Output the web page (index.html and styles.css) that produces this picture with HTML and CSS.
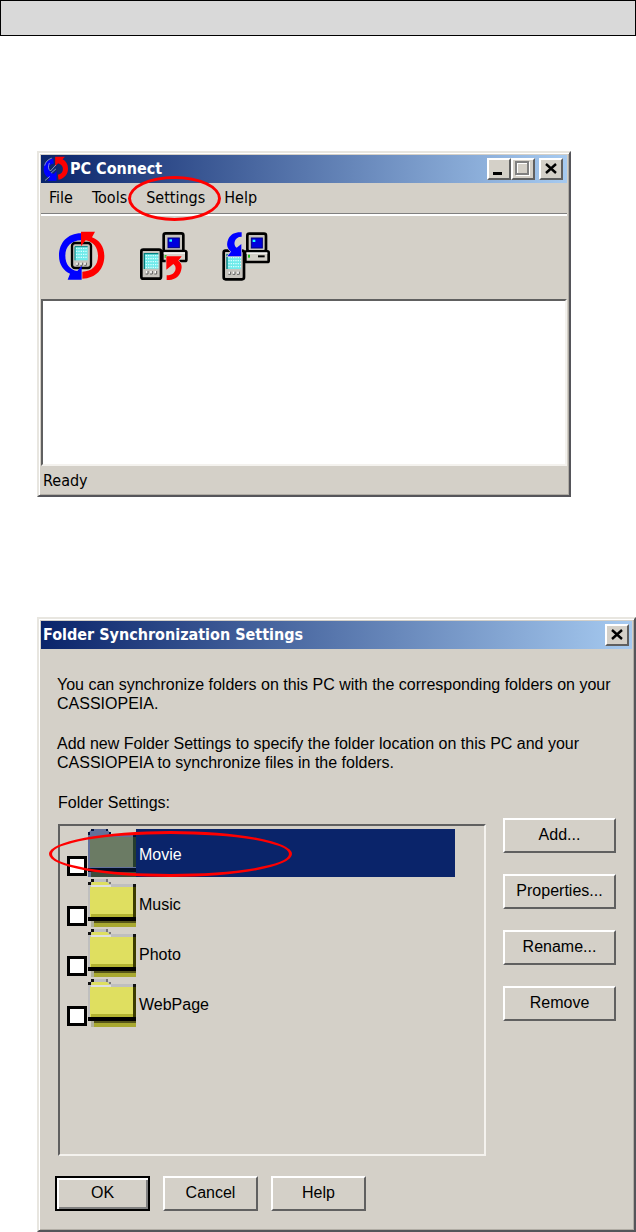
FILE: index.html
```
<!DOCTYPE html>
<html lang="en">
  <head>
    <meta charset="UTF-8" />
    <meta name="viewport" content="width=device-width, initial-scale=1.0" />
    <title>PC Connect</title>
    <link rel="stylesheet" href="styles.css">
  </head>
  <body>
    <header class="page-bar"></header>

    <main class="page">
      <!-- main window -->
      <section class="window window--main">
        <div class="titlebar titlebar--app">
          <svg class="titlebar__icon" viewBox="24 26 74 76" aria-hidden="true">
            <path d="M54 33C36 36 26 50 26 64C26 78 33 88 44 92L37 99H64V70L56 79C46 76 42 70 42 62C42 54 47 49 56 48Z" fill="#00f" />
            <path d="M70 96C88 92 98 78 98 63C98 50 92 40 82 35L89 28H60V56L69 47C78 50 83 56 83 64C83 72 78 79 68 81Z" fill="red" />
            <path d="M50 32Q32 38 29 54M43 46Q36 62 46 70L62 52M48 76L62 64M30 98L44 86" fill="none" stroke="#c4c8d8" stroke-width="2" />
          </svg>
          <h1 class="titlebar__text">PC Connect</h1>
          <div class="titlebar__buttons">
            <button class="caption-btn" type="button" aria-label="Minimize">
              <svg viewBox="0 0 20 18"><rect x="4" y="12" width="9" height="3" /></svg>
            </button>
            <button class="caption-btn" type="button" aria-label="Maximize" disabled>
              <svg viewBox="0 0 20 18">
                <path d="M4 3H16V15H4Z" fill="none" stroke="#fff" stroke-width="2" />
                <path d="M3 2H15V14H3Z" fill="none" stroke="#808080" stroke-width="2" />
              </svg>
            </button>
            <button class="caption-btn caption-btn--close" type="button" aria-label="Close">
              <svg viewBox="0 0 20 18"><path d="M5 4L15 13M15 4L5 13" stroke="#000" stroke-width="2.4" /></svg>
            </button>
          </div>
        </div>

        <nav class="menubar">
          <a class="menubar__item" href="#">File</a>
          <a class="menubar__item" href="#">Tools</a>
          <a class="menubar__item menubar__item--marked" href="#">Settings</a>
          <a class="menubar__item" href="#">Help</a>
        </nav>

        <div class="toolbar">
          <button class="toolbar__btn" type="button" aria-label="Synchronize">
            <svg viewBox="25 20 144 150">
              <rect x="67" y="56" width="57" height="75" rx="9" fill="#c6c3bd" stroke="#000" stroke-width="7" />
              <rect x="76" y="67" width="38" height="41" fill="#6feaea" />
              <path d="M79 72H114M79 81H114M79 90H114M79 99H114" stroke="#d5ffff" stroke-width="4" stroke-dasharray="4 3" />
              <path d="M76 108V67H114" fill="none" stroke="#008080" stroke-width="3" />
              <path d="M80 119H85M92 119H97M104 119H109" stroke="#fff" stroke-width="7" />
              <path d="M86 115V123H80M98 115V123H92M110 115V123H104" fill="none" stroke="#606060" stroke-width="3" />
              <path d="M94 27C54 27 28 55 28 94C28 121 42 139 61 148L54 166H96V124L83 140C60 136 47 119 47 94C47 66 65 49 94 48Z" fill="#00f" />
              <path d="M98 163C138 163 164 134 164 96C164 66 149 47 127 39L136 22H94V66L108 48C132 53 145 70 145 95C145 123 127 142 98 142Z" fill="red" />
            </svg>
          </button>
          <button class="toolbar__btn" type="button" aria-label="Copy to PC">
            <svg viewBox="315 255 144 150">
              <rect x="386" y="262" width="59" height="55" rx="6" fill="#c6c3bd" stroke="#000" stroke-width="8" />
              <rect x="399" y="276" width="34" height="29" fill="#00d" stroke="#000080" stroke-width="3" />
              <rect x="403" y="280" width="8" height="7" fill="#2ff" />
              <rect x="382" y="315" width="72" height="30" rx="4" fill="#d4d0c8" stroke="#000" stroke-width="8" />
              <path d="M386 321H450" stroke="#fff" stroke-width="4" />
              <rect x="389" y="327" width="6" height="9" fill="#19c119" />
              <rect x="319" y="311" width="59" height="87" rx="6" fill="#c6c3bd" stroke="#000" stroke-width="8" />
              <rect x="328" y="323" width="42" height="45" fill="#6feaea" />
              <path d="M332 329H370M332 338H370M332 347H370M332 356H370M332 364H370" stroke="#d5ffff" stroke-width="4" stroke-dasharray="4 3" />
              <path d="M328 369V323H370" fill="none" stroke="#008080" stroke-width="4" />
              <path d="M333 379H338M346 379H351M359 379H364" stroke="#fff" stroke-width="8" />
              <path d="M339 375V384H332M352 375V384H345M365 375V384H358" fill="none" stroke="#606060" stroke-width="3" />
              <path d="M394 331H440L430 344C441 352 443 363 436 380C429 395 417 402 395 402V388C409 388 418 382 421 373C423 363 421 359 415 354L394 371Z" fill="red" stroke="#d4d0c8" stroke-width="4" paint-order="stroke" />
            </svg>
          </button>
          <button class="toolbar__btn" type="button" aria-label="Copy to device">
            <svg viewBox="561 249 144 150">
              <rect x="566" y="308" width="61" height="86" rx="6" fill="#c6c3bd" stroke="#000" stroke-width="8" />
              <rect x="576" y="320" width="42" height="43" fill="#6feaea" />
              <path d="M580 329H618M580 338H618M580 347H618M580 356H618" stroke="#d5ffff" stroke-width="4" stroke-dasharray="4 3" />
              <path d="M576 363V320H618" fill="none" stroke="#008080" stroke-width="4" />
              <path d="M581 375H586M594 375H599M607 375H612" stroke="#fff" stroke-width="8" />
              <path d="M587 371V379H580M600 371V379H593M613 371V379H606" fill="none" stroke="#606060" stroke-width="3" />
              <rect x="637" y="257" width="56" height="53" rx="6" fill="#c6c3bd" stroke="#000" stroke-width="8" />
              <rect x="649" y="270" width="33" height="30" fill="#00d" stroke="#000080" stroke-width="3" />
              <rect x="653" y="275" width="8" height="7" fill="#2ff" />
              <rect x="631" y="310" width="70" height="32" rx="4" fill="#d4d0c8" stroke="#000" stroke-width="8" />
              <path d="M634 315H697" stroke="#fff" stroke-width="4" />
              <rect x="639" y="320" width="6" height="9" fill="#19c119" />
              <path d="M669 325H689" stroke="#000" stroke-width="6" />
              <path d="M620 253V266C608 266 601 272 599 281C597 290 600 295 605 299L619 288V325H577L588 311C576 300 573 289 580 273C588 258 600 252 620 253Z" fill="#00f" stroke="#d4d0c8" stroke-width="4" paint-order="stroke" />
            </svg>
          </button>
        </div>

        <div class="client"></div>
        <footer class="statusbar">Ready</footer>
      </section>

      <!-- folder settings dialog -->
      <form class="window window--dialog">
        <div class="titlebar">
          <h2 class="titlebar__text">Folder Synchronization Settings</h2>
          <div class="titlebar__buttons">
            <button class="caption-btn" type="button" aria-label="Close">
              <svg viewBox="0 0 20 18"><path d="M5 4L15 13M15 4L5 13" stroke="#000" stroke-width="2.4" /></svg>
            </button>
          </div>
        </div>

        <div class="dialog">
          <p class="dialog__text">You can synchronize folders on this PC with the corresponding folders on your<br />CASSIOPEIA.</p>
          <p class="dialog__text">Add new Folder Settings to specify the folder location on this PC and your<br />CASSIOPEIA to synchronize files in the folders.</p>
          <p class="dialog__label" id="folders-label">Folder Settings:</p>

          <div class="dialog__main">
            <ul class="folders" aria-labelledby="folders-label">
              <li class="folder folder--selected">
                <input class="folder__check" id="folder-movie" type="checkbox" />
                <svg class="folder__icon" viewBox="0 0 48 48" aria-hidden="true">
                  <path d="M0 4L4 0H19L23 5H48V48H0Z" fill="#62719b" />
                  <path d="M2 8H45V38H2Z" fill="#6b7b64" />
                  <path d="M45 8H48V38H45Z" fill="#253d2e" />
                  <path d="M0 39H48V43H0Z" fill="#041029" />
                  <path d="M3 43H48V48H3Z" fill="#3d4c3c" />
                  <path d="M0 3H2V6H0ZM3 0H6V2H3ZM18 0H20V2H18ZM21 3H23V5H21ZM45 5H48V8H45Z" fill="#05133d" />
                </svg>
                <label class="folder__name" for="folder-movie">Movie</label>
              </li>
              <li class="folder">
                <input class="folder__check" id="folder-music" type="checkbox" />
                <svg class="folder__icon" viewBox="0 0 48 48" aria-hidden="true"><use href="#folder" /></svg>
                <label class="folder__name" for="folder-music">Music</label>
              </li>
              <li class="folder">
                <input class="folder__check" id="folder-photo" type="checkbox" />
                <svg class="folder__icon" viewBox="0 0 48 48" aria-hidden="true"><use href="#folder" /></svg>
                <label class="folder__name" for="folder-photo">Photo</label>
              </li>
              <li class="folder">
                <input class="folder__check" id="folder-webpage" type="checkbox" />
                <svg class="folder__icon" viewBox="0 0 48 48" aria-hidden="true"><use href="#folder" /></svg>
                <label class="folder__name" for="folder-webpage">WebPage</label>
              </li>
            </ul>

            <div class="dialog__side">
              <button class="btn" type="button">Add...</button>
              <button class="btn" type="button">Properties...</button>
              <button class="btn" type="button">Rename...</button>
              <button class="btn" type="button">Remove</button>
            </div>
          </div>

          <div class="dialog__actions">
            <button class="btn btn--default" type="submit">OK</button>
            <button class="btn" type="button">Cancel</button>
            <button class="btn" type="button">Help</button>
          </div>
        </div>
      </form>
    </main>

    <svg class="defs" aria-hidden="true">
      <defs>
        <g id="folder">
          <path d="M0 5L4 0H18L23 5H46V8H3V38H0Z" fill="#bfbfbf" />
          <path d="M4 3H19L22 6H3Z" fill="#dfdf60" />
          <path d="M3 6H23V8H3Z" fill="#e0e0e0" />
          <path d="M2 8H45V38H2Z" fill="#dfdf60" />
          <path d="M3 35H45V38H3Z" fill="#b4b430" />
          <path d="M3 43H48V48H3Z" fill="#a8a830" />
          <path d="M3 42H48V44H3Z" fill="#55551a" />
          <path d="M45 8H48V40H45Z" fill="#3c3c00" />
          <path d="M0 38H48V42H0Z" fill="#000" />
          <path d="M3 42H6V48H3Z" fill="#b0b09a" />
          <path d="M0 3H3V6H0ZM3 0H6V3H3ZM45 5H48V8H45Z" fill="#111" />
          <path d="M18 0H20V3H18ZM21 3H23V5H21Z" fill="#777" />
        </g>
      </defs>
    </svg>
  </body>
</html>
```
FILE: styles.css
```
*,
*::after {
  box-sizing: border-box;
}

body {
  margin: 0;
  background-color: #fff;
  color: #000;
  font-family: "Liberation Sans", Arial, sans-serif;
  font-size: 16px;
  line-height: 20px;
}

.page-bar {
  height: 36px;
  border: 1px solid #000;
  background-color: #d9d9d9;
}

.page {
  padding: 115px 0 0 37px;
}

/* windows */
.window {
  padding: 2px;
  border: 2px solid;
  border-color: #e8e6e0 #55555a #55555a #e8e6e0;
  background-color: #d4d0c8;
  box-shadow: inset 1px 1px #fff, inset -1px -1px #b0aca4;
}

.window--main {
  margin-right: 65px;
  font-family: "DejaVu Sans Condensed", Tahoma, sans-serif;
}

.window--dialog {
  margin-top: 120px;
}

.titlebar {
  display: flex;
  align-items: center;
  height: 28px;
  padding: 0 3px 0 2px;
  background: linear-gradient(to right, #0a246a, #a6caf0);
}

.titlebar--app {
  padding-right: 4px;
}

.titlebar__icon {
  width: 25px;
  height: 26px;
  margin-right: 2px;
}

.titlebar__text {
  flex: 1;
  margin: 0;
  color: #fff;
  font-family: "DejaVu Sans Condensed", Tahoma, sans-serif;
  font-size: 16px;
  font-weight: bold;
  white-space: nowrap;
}

.titlebar__buttons {
  display: flex;
}

.caption-btn {
  display: flex;
  width: 24px;
  height: 22px;
  padding: 0;
  border: 2px solid;
  border-color: #fff #606060 #606060 #fff;
  background-color: #d4d0c8;
}

.caption-btn svg {
  width: 20px;
  height: 18px;
}

.caption-btn--close {
  margin-left: 4px;
}

.menubar {
  display: flex;
  gap: 19px;
  height: 33px;
  padding: 5px 8px;
  border-bottom: 2px solid #fff;
  box-shadow: inset 0 -1px #808080;
}

.menubar__item {
  color: #000;
  text-decoration: none;
}

.menubar__item--marked {
  position: relative;
}

.menubar__item--marked::after,
.folder--selected::after {
  content: "";
  position: absolute;
  border: 3px solid red;
  border-radius: 50%;
}

.menubar__item--marked::after {
  inset: -12px -16px -12px -18px;
}

.toolbar {
  display: flex;
  gap: 34px;
  height: 83px;
  padding: 15px 17px;
}

.toolbar__btn {
  width: 48px;
  height: 50px;
  padding: 0;
  border: none;
  background: none;
}

.toolbar__btn svg {
  display: block;
  width: 48px;
  height: 50px;
}

.client {
  height: 167px;
  border: 2px solid;
  border-color: #606060 #f4f2ee #f4f2ee #606060;
  background-color: #fff;
}

.statusbar {
  padding: 5px 2px 2px;
}

/* dialog */
.dialog {
  padding: 26px 14px 17px;
}

.dialog__text {
  margin: 0 2px 21px;
  line-height: 19px;
}

.dialog__label {
  margin: 0 3px;
}

.dialog__main {
  display: flex;
  gap: 17px;
  margin: 11px 2px 20px 3px;
}

.folders {
  flex: 1;
  height: 332px;
  margin: 0;
  padding: 3px 29px 3px 7px;
  border: 2px solid;
  border-color: #606060 #f4f2ee #f4f2ee #606060;
  list-style: none;
}

.folder {
  display: flex;
  align-items: flex-end;
  height: 48px;
  margin-bottom: 2px;
}

.folder--selected {
  position: relative;
}

.folder--selected::after {
  width: 243px;
  height: 46px;
  top: 2px;
  left: -18px;
}

.folder__check {
  appearance: none;
  width: 20px;
  height: 20px;
  margin: 0 1px 1px 0;
  border: 3px solid #000;
  background-color: #fff;
}

.folder__check:checked {
  background-color: #0a246a;
}

.folder__icon {
  width: 48px;
  height: 48px;
}

.folder__name {
  flex: 1;
  padding: 0 3px;
  line-height: 52px;
  height: 48px;
}

.folder--selected .folder__name {
  background-color: #0a246a;
  color: #fff;
}

.dialog__side {
  display: flex;
  flex-direction: column;
  gap: 21px;
  width: 113px;
  margin-top: -6px;
}

.btn {
  height: 35px;
  padding: 0 0 2px;
  border: 2px solid;
  border-color: #fff #606060 #606060 #fff;
  background-color: #d4d0c8;
  color: #000;
  font-family: inherit;
  font-size: 16px;
}

.btn--default {
  border-color: #000;
  box-shadow: inset 2px 2px #fff, inset -2px -2px #808080;
}

.dialog__actions {
  display: flex;
  gap: 13px;
}

.dialog__actions .btn {
  width: 95px;
}

.defs {
  position: absolute;
  width: 0;
  height: 0;
}
```
